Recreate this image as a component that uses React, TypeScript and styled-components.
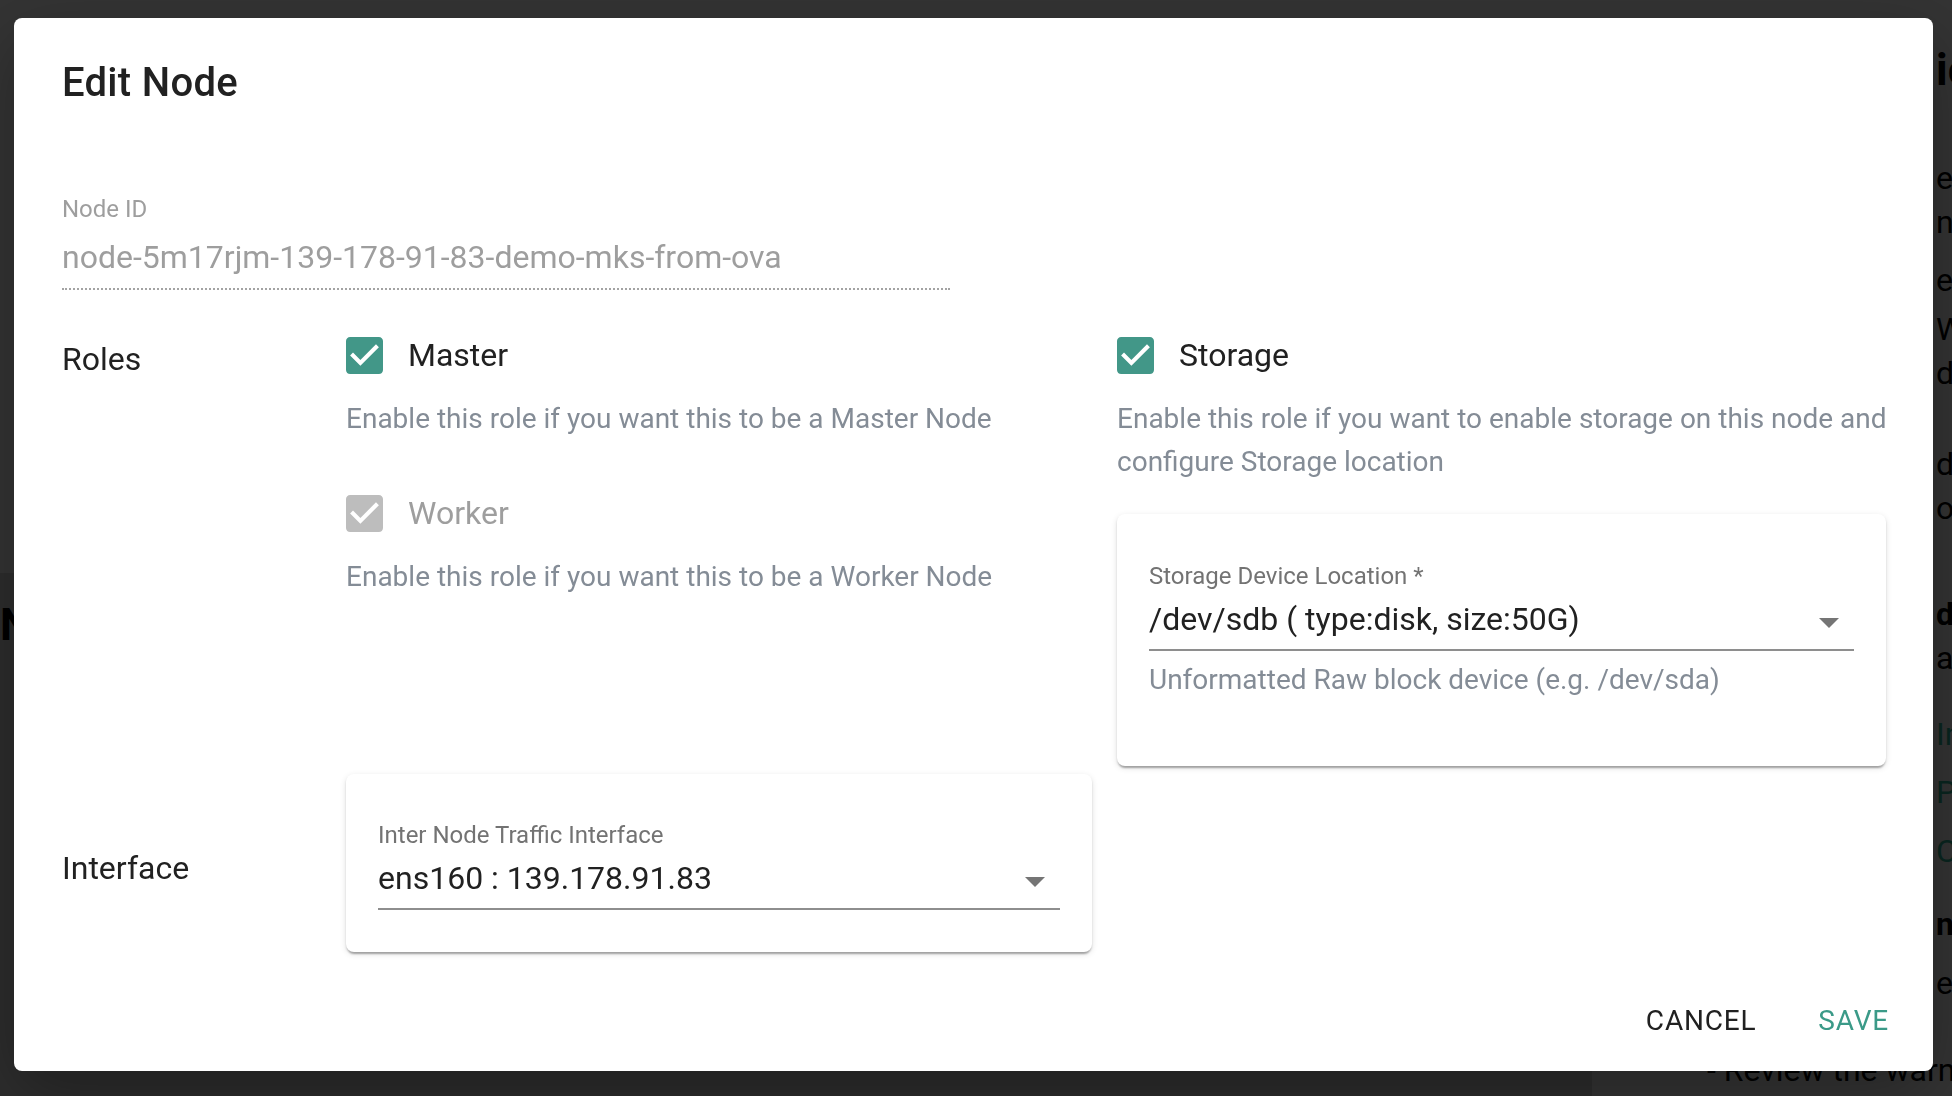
import React from 'react';
import styled, { createGlobalStyle } from 'styled-components';

const GlobalStyle = createGlobalStyle`
  html, body {
    margin: 0;
    padding: 0;
  }
  body {
    font-family: Roboto, "Liberation Sans", Arial, sans-serif;
    background: #fff;
    overflow: hidden;
  }
  * {
    box-sizing: border-box;
  }
`;

/* ---------- page behind the modal ---------- */

const Page = styled.div`
  display: grid;
  grid-template-columns: 1592px 344px 1fr;
  height: 100vh;
  overflow: hidden;
  white-space: nowrap;
  background: #fff;
`;

const LeftPane = styled.div`
  display: flex;
  flex-direction: column;
  background: #dcdcdc;
`;

const TopPanel = styled.div`
  height: 573px;
  background: #fff;
`;

const PaneHeading = styled.h1`
  margin: 26px 0 0;
  font-size: 44px;
  line-height: 52px;
  font-weight: 700;
  color: #000;
`;

const MidPane = styled.div`
  display: flex;
  flex-direction: column;
  justify-content: flex-end;
  padding: 0 0 4px 115px;
  min-width: 0;
`;

const RightPane = styled.div`
  display: flex;
  flex-direction: column;
  padding-top: 44px;
  overflow: hidden;
`;

const BgLine = styled.div<{ $mt: number; $bold?: boolean; $green?: boolean; $big?: boolean }>`
  margin-top: ${(p) => p.$mt}px;
  font-size: ${(p) => (p.$big ? 44 : 32)}px;
  line-height: ${(p) => (p.$big ? 52 : 44)}px;
  font-weight: ${(p) => (p.$bold ? 700 : 400)};
  color: ${(p) => (p.$green ? '#2fb89a' : '#000')};
`;

const bgLines = [
  { t: 'ications', mt: 0, big: true, bold: true },
  { t: 'ersion', mt: 60 },
  { t: 'nodes', mt: 0 },
  { t: 'ed', mt: 14 },
  { t: 'Worker', mt: 5 },
  { t: ' disk', mt: 0 },
  { t: 'dd', mt: 47 },
  { t: 'ode', mt: 0 },
  { t: 'd', mt: 62, bold: true },
  { t: ' and', mt: 0 },
  { t: 'Install', mt: 32, green: true },
  { t: 'Prepare', mt: 14, green: true },
  { t: 'Configure', mt: 15, green: true },
  { t: 'next', mt: 29, bold: true },
  { t: 'errors', mt: 15 },
];

/* ---------- modal ---------- */

const Overlay = styled.div`
  position: fixed;
  inset: 0;
  display: flex;
  align-items: flex-start;
  padding: 18px 19px 0 14px;
  background: rgba(0, 0, 0, 0.8);
`;

const Dialog = styled.div`
  width: 100%;
  display: flex;
  flex-direction: column;
  background: #fff;
  border-radius: 8px;
  box-shadow: 0 22px 70px rgba(0, 0, 0, 0.3);
`;

const Title = styled.h2`
  margin: 0;
  padding: 33px 48px 0;
  font-size: 40px;
  line-height: 64px;
  font-weight: 500;
  color: #212121;
  letter-spacing: 0.3px;
`;

const Content = styled.div`
  padding: 0 48px;
`;

const NodeField = styled.div`
  width: 888px;
  margin-top: 82px;
`;

const FieldLabel = styled.div<{ $muted?: boolean }>`
  font-size: 24px;
  line-height: 24px;
  color: ${(p) => (p.$muted ? '#9e9e9e' : '#737373')};
`;

const DisabledValue = styled.div`
  margin-top: 17px;
  padding-bottom: 12px;
  font-size: 32px;
  line-height: 38px;
  color: #9e9e9e;
  border-bottom: 2px dotted #a3a3a3;
`;

const FormGrid = styled.div`
  margin-top: 41px;
  display: grid;
  grid-template-columns: 284px 771px 769px;
  row-gap: 8px;
`;

const RowLabel = styled.div<{ $centered?: boolean }>`
  font-size: 32px;
  line-height: 48px;
  color: #212121;
  align-self: ${(p) => (p.$centered ? 'center' : 'start')};
  padding-top: ${(p) => (p.$centered ? 10 : 4)}px;
`;

const RoleColumn = styled.div<{ $gutter?: number }>`
  display: flex;
  flex-direction: column;
  padding-right: ${(p) => p.$gutter ?? 0}px;
`;

const CheckRow = styled.div<{ $mt?: number }>`
  display: flex;
  align-items: center;
  gap: 25px;
  height: 48px;
  margin-top: ${(p) => p.$mt ?? 0}px;
`;

const CheckLabel = styled.span<{ $disabled?: boolean }>`
  font-size: 32px;
  line-height: 48px;
  color: ${(p) => (p.$disabled ? '#9e9e9e' : '#212121')};
`;

const Description = styled.p<{ $bleed?: boolean }>`
  margin: 18px ${(p) => (p.$bleed ? -20 : 0)}px 0 0;
  font-size: 28px;
  line-height: 43px;
  color: #848c96;
`;

const Card = styled.div<{ $pt: number; $pb: number; $mt?: number }>`
  margin-top: ${(p) => p.$mt ?? 0}px;
  padding: ${(p) => p.$pt}px 32px ${(p) => p.$pb}px;
  background: #fff;
  border-radius: 8px;
  box-shadow: 0 4px 2px -2px rgba(0, 0, 0, 0.2), 0 2px 2px 0 rgba(0, 0, 0, 0.14),
    0 2px 6px 0 rgba(0, 0, 0, 0.12);
`;

const SelectBox = styled.div`
  margin-top: 12px;
  display: flex;
  align-items: center;
  justify-content: space-between;
  padding-bottom: 11px;
  border-bottom: 2px solid #8e8e8e;
`;

const SelectValue = styled.span`
  font-size: 32px;
  line-height: 38px;
  color: #212121;
`;

const Arrow = styled.svg`
  width: 20px;
  height: 10px;
  margin: 7px 15px 0 0;
  fill: #757575;
`;

const Helper = styled.div`
  margin-top: 12px;
  font-size: 28px;
  line-height: 34px;
  color: #848c96;
`;

const Actions = styled.div`
  display: flex;
  justify-content: flex-end;
  gap: 30px;
  margin-top: 32px;
  padding: 0 28px 15px 0;
`;

const TextButton = styled.button<{ $primary?: boolean }>`
  height: 72px;
  padding: 0 16px;
  border: 0;
  background: none;
  font-family: inherit;
  font-size: 28px;
  font-weight: 400;
  letter-spacing: 0.8px;
  text-transform: uppercase;
  color: ${(p) => (p.$primary ? '#3b9a88' : '#212121')};
  cursor: pointer;
`;

const CheckBox = ({ disabled }: { disabled?: boolean }) => (
  <svg width="37" height="37" viewBox="3 3 18 18" style={{ flexShrink: 0 }}>
    <path
      fill={disabled ? '#bdbdbd' : '#429788'}
      d="M19 3H5c-1.11 0-2 .9-2 2v14c0 1.1.89 2 2 2h14c1.11 0 2-.9 2-2V5c0-1.1-.89-2-2-2zm-9 14l-5-5 1.41-1.41L10 14.17l7.59-7.59L19 8l-9 9z"
    />
  </svg>
);

const DropArrow = () => (
  <Arrow viewBox="0 0 20 10">
    <path d="M0 0h20L10 10z" />
  </Arrow>
);

function App() {
  return (
    <>
      <GlobalStyle />
      <Page>
        <LeftPane>
          <TopPanel />
          <PaneHeading>Nodes</PaneHeading>
        </LeftPane>
        <MidPane>
          <BgLine $mt={0}>- Review the warnings</BgLine>
        </MidPane>
        <RightPane>
          {bgLines.map((l, i) => (
            <BgLine key={i} $mt={l.mt} $bold={l.bold} $green={l.green} $big={l.big}>
              {l.t}
            </BgLine>
          ))}
        </RightPane>
      </Page>

      <Overlay>
        <Dialog>
          <Title>Edit Node</Title>
          <Content>
            <NodeField>
              <FieldLabel $muted>Node ID</FieldLabel>
              <DisabledValue>node-5m17rjm-139-178-91-83-demo-mks-from-ova</DisabledValue>
            </NodeField>

            <FormGrid>
              <RowLabel>Roles</RowLabel>
              <RoleColumn $gutter={25}>
                <CheckRow>
                  <CheckBox />
                  <CheckLabel>Master</CheckLabel>
                </CheckRow>
                <Description>Enable this role if you want this to be a Master Node</Description>
                <CheckRow $mt={49}>
                  <CheckBox disabled />
                  <CheckLabel $disabled>Worker</CheckLabel>
                </CheckRow>
                <Description>Enable this role if you want this to be a Worker Node</Description>
              </RoleColumn>
              <RoleColumn>
                <CheckRow>
                  <CheckBox />
                  <CheckLabel>Storage</CheckLabel>
                </CheckRow>
                <Description $bleed>
                  Enable this role if you want to enable storage on this node and configure Storage
                  location
                </Description>
                <Card $mt={31} $pt={50} $pb={69}>
                  <FieldLabel>Storage Device Location *</FieldLabel>
                  <SelectBox>
                    <SelectValue>/dev/sdb ( type:disk, size:50G)</SelectValue>
                    <DropArrow />
                  </SelectBox>
                  <Helper>Unformatted Raw block device (e.g. /dev/sda)</Helper>
                </Card>
              </RoleColumn>

              <RowLabel $centered>Interface</RowLabel>
              <RoleColumn $gutter={25}>
                <Card $pt={49} $pb={42}>
                  <FieldLabel>Inter Node Traffic Interface</FieldLabel>
                  <SelectBox>
                    <SelectValue>ens160 : 139.178.91.83</SelectValue>
                    <DropArrow />
                  </SelectBox>
                </Card>
              </RoleColumn>
            </FormGrid>
          </Content>

          <Actions>
            <TextButton>Cancel</TextButton>
            <TextButton $primary>Save</TextButton>
          </Actions>
        </Dialog>
      </Overlay>
    </>
  );
}

export default App;
